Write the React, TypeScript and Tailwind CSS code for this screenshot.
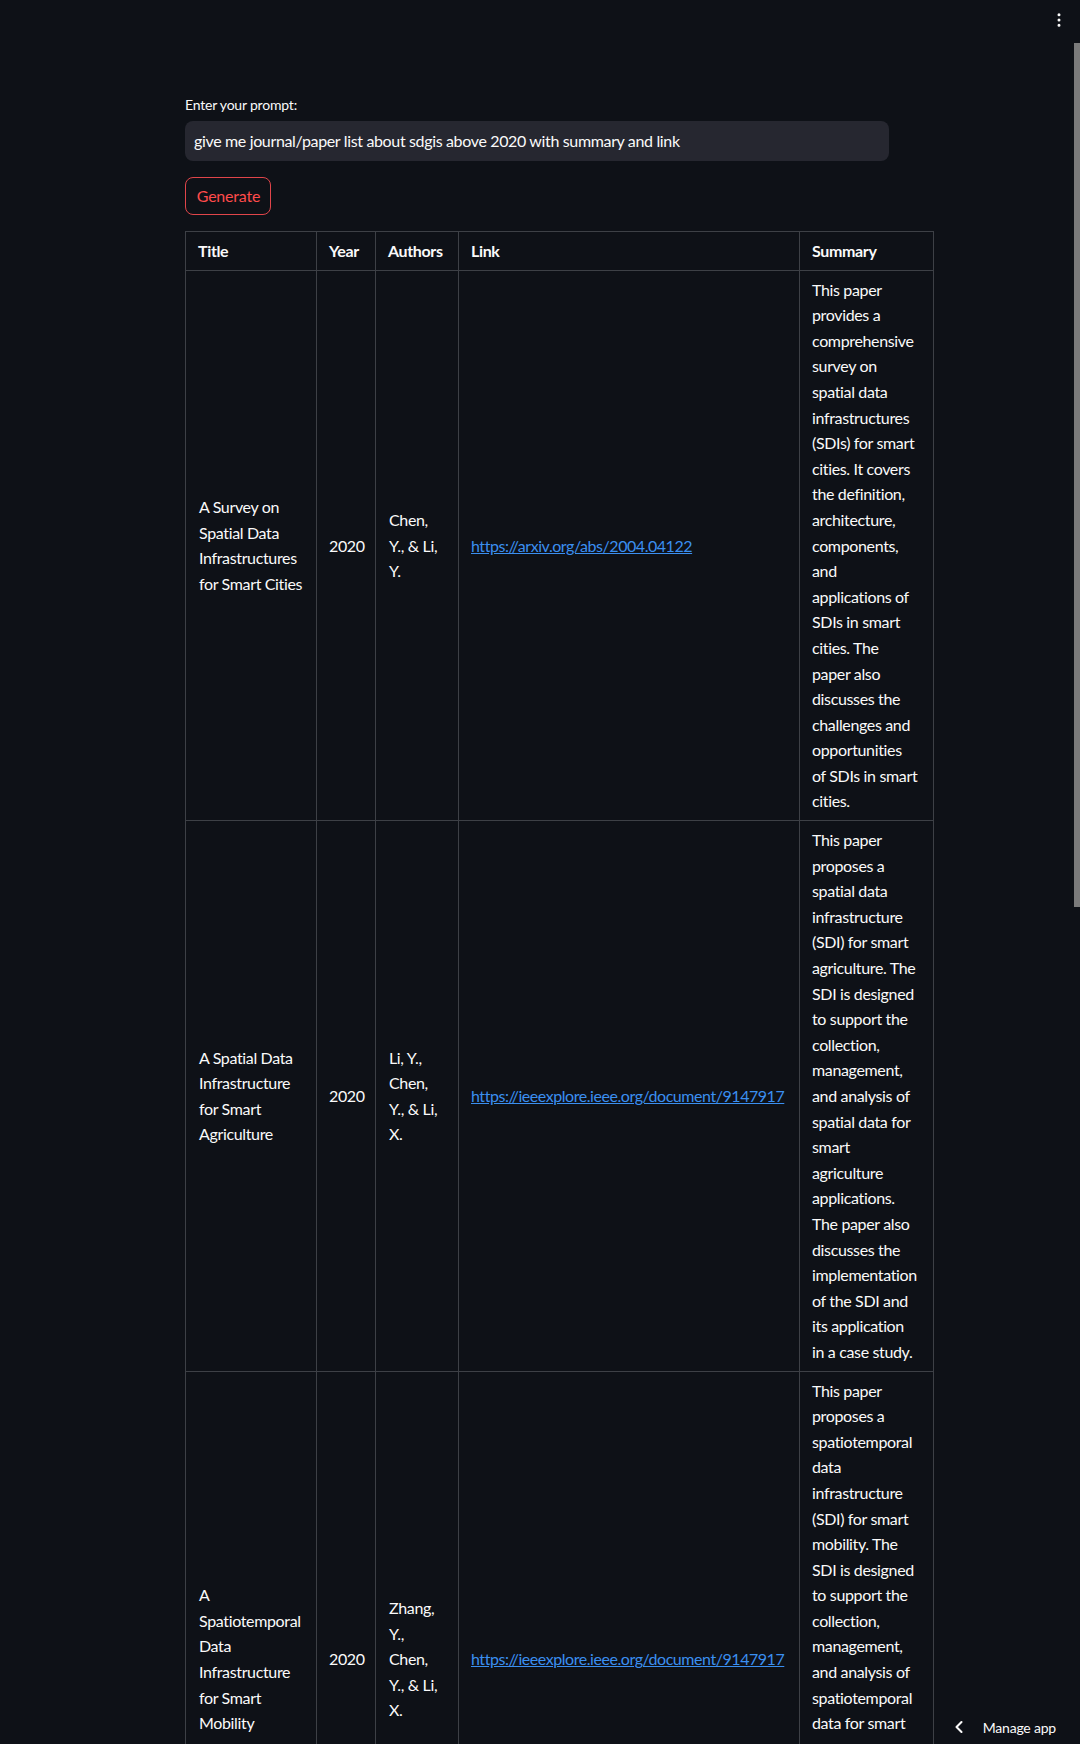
import React from "react";
import { ChevronLeft, EllipsisVertical } from "lucide-react";

interface Paper {
  title: string[];
  year: string;
  authors: string[];
  link: string;
  summary: string[];
}

const papers: Paper[] = [
  {
    title: ["A Survey on", "Spatial Data", "Infrastructures", "for Smart Cities"],
    year: "2020",
    authors: ["Chen,", "Y., & Li,", "Y."],
    link: "https://arxiv.org/abs/2004.04122",
    summary: [
      "This paper",
      "provides a",
      "comprehensive",
      "survey on",
      "spatial data",
      "infrastructures",
      "(SDIs) for smart",
      "cities. It covers",
      "the definition,",
      "architecture,",
      "components,",
      "and",
      "applications of",
      "SDIs in smart",
      "cities. The",
      "paper also",
      "discusses the",
      "challenges and",
      "opportunities",
      "of SDIs in smart",
      "cities.",
    ],
  },
  {
    title: ["A Spatial Data", "Infrastructure", "for Smart", "Agriculture"],
    year: "2020",
    authors: ["Li, Y.,", "Chen,", "Y., & Li,", "X."],
    link: "https://ieeexplore.ieee.org/document/9147917",
    summary: [
      "This paper",
      "proposes a",
      "spatial data",
      "infrastructure",
      "(SDI) for smart",
      "agriculture. The",
      "SDI is designed",
      "to support the",
      "collection,",
      "management,",
      "and analysis of",
      "spatial data for",
      "smart",
      "agriculture",
      "applications.",
      "The paper also",
      "discusses the",
      "implementation",
      "of the SDI and",
      "its application",
      "in a case study.",
    ],
  },
  {
    title: ["A", "Spatiotemporal", "Data", "Infrastructure", "for Smart", "Mobility"],
    year: "2020",
    authors: ["Zhang,", "Y.,", "Chen,", "Y., & Li,", "X."],
    link: "https://ieeexplore.ieee.org/document/9147917",
    summary: [
      "This paper",
      "proposes a",
      "spatiotemporal",
      "data",
      "infrastructure",
      "(SDI) for smart",
      "mobility. The",
      "SDI is designed",
      "to support the",
      "collection,",
      "management,",
      "and analysis of",
      "spatiotemporal",
      "data for smart",
      "mobility",
      "applications.",
      "The paper also",
      "discusses the",
      "implementation",
      "of the SDI and",
      "its application",
      "in a case study.",
    ],
  },
];

function Lines({ items }: { items: string[] }) {
  return (
    <>
      {items.map((l, i) => (
        <span key={i} className="block whitespace-nowrap">
          {l}
        </span>
      ))}
    </>
  );
}

export default function App() {
  const cell = "border border-[#3d4046] px-3 py-1.5 text-left align-middle";

  return (
    <div className="relative flex h-[1744px] overflow-hidden bg-[#0e1117] font-[Lato,sans-serif] text-[#fafafa]">
      {/* main scroll area */}
      <div className="flex-1">
        <div className="mx-auto max-w-[736px] px-4 pt-[95px]">
          <label className="block text-[14px] leading-[20px] tracking-[-0.2px]">
            Enter your prompt:
          </label>
          <div className="mt-[6px] flex h-[40px] items-center rounded-lg bg-[#262730] px-[9px] text-[16px] tracking-[-0.35px]">
            give me journal/paper list about sdgis above 2020 with summary and link
          </div>

          <button className="mt-4 h-[38px] w-[86px] rounded-lg border border-[#e0454a] pl-[1px] text-[16px] tracking-[-0.2px] text-[#ff4b4b]">
            Generate
          </button>

          <table className="mt-[16px] w-[748px] table-fixed border-collapse text-[16px] leading-[25.6px] tracking-[-0.35px]">
            <colgroup>
              <col className="w-[131px]" />
              <col className="w-[59px]" />
              <col className="w-[83px]" />
              <col className="w-[341px]" />
              <col className="w-[134px]" />
            </colgroup>
            <thead>
              <tr className="font-bold">
                <th className={cell}>Title</th>
                <th className={cell}>Year</th>
                <th className={cell}>Authors</th>
                <th className={cell}>Link</th>
                <th className={cell}>Summary</th>
              </tr>
            </thead>
            <tbody>
              {papers.map((p, i) => (
                <tr key={i}>
                  <td className={`${cell} pl-[13px]`}>
                    <Lines items={p.title} />
                  </td>
                  <td className={cell}>{p.year}</td>
                  <td className={`${cell} pl-[13px]`}>
                    <Lines items={p.authors} />
                  </td>
                  <td className={`${cell} whitespace-nowrap`}>
                    <a
                      href={p.link}
                      className="tracking-[-0.45px] text-[#3b8ff0] underline"
                    >
                      {p.link}
                    </a>
                  </td>
                  <td className={`${cell} pr-1`}>
                    <Lines items={p.summary} />
                  </td>
                </tr>
              ))}
            </tbody>
          </table>
        </div>
      </div>

      {/* scrollbar */}
      <div className="w-[6px]">
        <div className="mt-[43px] h-[864px] bg-[#7b7b7b]" />
      </div>

      {/* header menu */}
      <button className="absolute right-[12px] top-[11px] text-[#fafafa]">
        <EllipsisVertical size={18} strokeWidth={2} />
      </button>

      {/* manage app */}
      <div className="absolute bottom-[6px] right-[24px] flex h-[22px] items-center text-[14px] tracking-[-0.2px]">
        <ChevronLeft size={20} strokeWidth={2.5} />
        <span className="ml-[14px]">Manage app</span>
      </div>
    </div>
  );
}
